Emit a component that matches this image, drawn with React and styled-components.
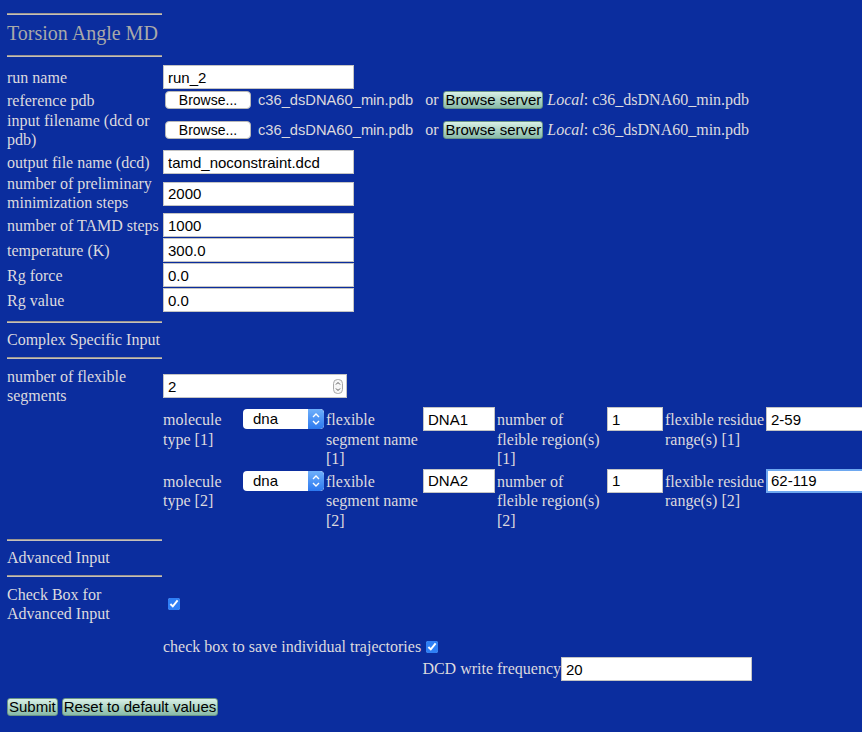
import React from "react";
import styled, { createGlobalStyle } from "styled-components";

const topFields = [
  { label: "run name", value: "run_2", h: 24 },
  { label: "reference pdb", file: true, h: 20 },
  { label: ["input filename (dcd or", "pdb)"], file: true, h: 38 },
  { label: "output file name (dcd)", value: "tamd_noconstraint.dcd", h: 24 },
  { label: ["number of preliminary", "minimization steps"], value: "2000", h: 37 },
  { label: "number of TAMD steps", value: "1000", h: 24 },
  { label: "temperature (K)", value: "300.0", h: 24 },
  { label: "Rg force", value: "0.0", h: 24 },
  { label: "Rg value", value: "0.0", h: 24 },
];

const segments = [
  { n: 1, name: "DNA1", regions: "1", range: "2-59" },
  { n: 2, name: "DNA2", regions: "1", range: "62-119", focused: true },
];

function Lines({ text }) {
  if (!Array.isArray(text)) return text;
  return text.map((line, i) => (
    <React.Fragment key={i}>
      {i > 0 && <br />}
      {line}
    </React.Fragment>
  ));
}

function SelectChevron() {
  return (
    <svg width="16" height="20" viewBox="0 0 16 20">
      <path d="M5 8 L8 5 L11 8" fill="none" stroke="#fff" strokeWidth="1.4" />
      <path d="M5 12 L8 15 L11 12" fill="none" stroke="#fff" strokeWidth="1.4" />
    </svg>
  );
}

function Spinner() {
  return (
    <svg width="10" height="15" viewBox="0 0 10 15">
      <rect x="0.5" y="0.5" width="9" height="14" rx="4" fill="#f6f6f6" stroke="#a8a8a8" />
      <path d="M3 5.5 L5 3.5 L7 5.5" fill="none" stroke="#555" strokeWidth="1" />
      <path d="M3 9.5 L5 11.5 L7 9.5" fill="none" stroke="#555" strokeWidth="1" />
    </svg>
  );
}

function FileField() {
  return (
    <FileLine>
      <FileButton type="button">Browse...</FileButton>
      <FileName>c36_dsDNA60_min.pdb</FileName>
      <OrText>or</OrText>
      <GreenButton type="button" $ml={5}>
        Browse server
      </GreenButton>
      <LocalText>
        <em>Local</em>: c36_dsDNA60_min.pdb
      </LocalText>
    </FileLine>
  );
}

export default function App() {
  return (
    <>
      <GlobalStyle />
      <Page>
        <Divider />
        <Title>Torsion Angle MD</Title>
        <Divider />

        <FieldList>
          {topFields.map((f, i) => (
            <Row key={i} $h={f.h}>
              <Label $lh={f.h === 37 ? 18.5 : 19}>
                <Lines text={f.label} />
              </Label>
              {f.file ? <FileField /> : <TextInput defaultValue={f.value} />}
            </Row>
          ))}
        </FieldList>

        <Divider $mt={9} />
        <SectionTitle>Complex Specific Input</SectionTitle>
        <Divider />

        <FieldList>
          <Row $h={38}>
            <Label>
              number of flexible
              <br />
              segments
            </Label>
            <NumberBox>
              <NumberText>2</NumberText>
              <Spinner />
            </NumberBox>
          </Row>
        </FieldList>

        <SegTable>
          {segments.map((s) => (
            <SegRow key={s.n}>
              <SegLabel $w={78}>
                molecule
                <br />
                type [{s.n}]
              </SegLabel>
              <SelectBox>
                <SelectText>dna</SelectText>
                <SelectArrows>
                  <SelectChevron />
                </SelectArrows>
              </SelectBox>
              <SegLabel $w={95}>
                flexible
                <br />
                segment name
                <br />[{s.n}]
              </SegLabel>
              <TextInput $w={72} defaultValue={s.name} />
              <SegLabel $w={108}>
                number of
                <br />
                fleible region(s)
                <br />[{s.n}]
              </SegLabel>
              <TextInput $w={56} defaultValue={s.regions} />
              <SegLabel $w={99}>
                flexible residue
                <br />
                range(s) [{s.n}]
              </SegLabel>
              <TextInput $focused={s.focused} defaultValue={s.range} />
            </SegRow>
          ))}
        </SegTable>

        <Divider $mt={9} />
        <SectionTitle>Advanced Input</SectionTitle>
        <Divider />

        <FieldList>
          <Row $h={38}>
            <Label>
              Check Box for
              <br />
              Advanced Input
            </Label>
            <Check type="checkbox" defaultChecked />
          </Row>
        </FieldList>

        <TrajBlock>
          <TrajRow>
            check box to save individual trajectories
            <Check type="checkbox" defaultChecked />
          </TrajRow>
          <FreqRow>
            <FreqLabel>DCD write frequency</FreqLabel>
            <TextInput defaultValue="20" />
          </FreqRow>
        </TrajBlock>

        <Actions>
          <GreenButton type="button">Submit</GreenButton>
          <GreenButton type="button">Reset to default values</GreenButton>
        </Actions>
      </Page>
    </>
  );
}

const GlobalStyle = createGlobalStyle`
  html, body {
    overflow-x: hidden;
  }
  body {
    margin: 0;
    background: #0b2d9e;
    color: #dddadf;
    font-family: "Liberation Serif", "Times New Roman", serif;
    font-size: 16px;
  }
`;

const Page = styled.div`
  padding: 13px 0 0 7px;
  min-height: 732px;
  box-sizing: border-box;
  overflow: hidden;
`;

const Divider = styled.div`
  width: 155px;
  margin-top: ${(p) => p.$mt || 0}px;
  border-top: 1px solid #9c968f;
  border-bottom: 1px solid #c6c0ba;
`;

const Title = styled.h2`
  margin: 0;
  padding: 6px 0 10px;
  font-size: 20px;
  line-height: 24px;
  font-weight: normal;
  color: #a9a9a9;
`;

const SectionTitle = styled.div`
  padding: 8px 0;
  font-size: 16px;
  line-height: 18px;
`;

const FieldList = styled.div`
  display: flex;
  flex-direction: column;
  gap: 1px;
  margin-top: 8px;
`;

const Row = styled.div`
  display: flex;
  align-items: center;
  min-height: ${(p) => p.$h}px;
`;

const Label = styled.div`
  width: 156px;
  flex: none;
  line-height: ${(p) => p.$lh || 19}px;
  white-space: nowrap;
`;

const TextInput = styled.input`
  flex: none;
  box-sizing: border-box;
  width: ${(p) => p.$w || 191}px;
  height: 24px;
  margin: 0;
  border: ${(p) => (p.$focused ? "2px solid #6ea8f0" : "1px solid #c4c4c4")};
  padding: 0 4px 0 ${(p) => (p.$focused ? 3 : 4)}px;
  background: #fff;
  color: #000;
  font-family: "Liberation Sans", Arial, sans-serif;
  font-size: 15px;
  outline: none;
`;

const FileLine = styled.div`
  display: flex;
  align-items: center;
  white-space: nowrap;
`;

const FileButton = styled.button`
  width: 86px;
  height: 18px;
  margin: 0 0 0 2px;
  padding: 0;
  background: #fff;
  border: 1px solid #b8b8b8;
  border-radius: 4px;
  color: #000;
  font-family: "Liberation Sans", Arial, sans-serif;
  font-size: 14px;
  line-height: 16px;
`;

const FileName = styled.span`
  margin-left: 7px;
  font-family: "Liberation Sans", Arial, sans-serif;
  font-size: 14.7px;
`;

const OrText = styled.span`
  margin-left: 12px;
`;

const LocalText = styled.span`
  margin-left: 4px;
`;

const GreenButton = styled.button`
  height: 18px;
  margin: 0 0 0 ${(p) => p.$ml || 0}px;
  padding: 0 1px;
  border: 1px solid #6a9485;
  border-radius: 3px;
  background: linear-gradient(#d9f0e6, #aed5c6 50%, #88baa8);
  color: #000;
  font-family: "Liberation Sans", Arial, sans-serif;
  font-size: 15px;
  line-height: 16px;
  white-space: nowrap;
`;

const NumberBox = styled.div`
  box-sizing: border-box;
  width: 184px;
  height: 24px;
  display: flex;
  align-items: center;
  border: 1px solid #c4c4c4;
  background: #fff;
  padding: 0 3px 0 4px;
`;

const NumberText = styled.span`
  flex: 1;
  color: #000;
  font-family: "Liberation Sans", Arial, sans-serif;
  font-size: 15px;
`;

const SegTable = styled.div`
  margin-top: 2px;
  padding-left: 156px;
  display: flex;
  flex-direction: column;
`;

const SegRow = styled.div`
  display: flex;
  align-items: flex-start;
  gap: 2px;
`;

const SegLabel = styled.div`
  flex: none;
  width: ${(p) => p.$w}px;
  padding-top: 3px;
  line-height: 19.5px;
  white-space: nowrap;
`;

const SelectBox = styled.div`
  flex: none;
  display: flex;
  width: 81px;
  height: 20px;
  margin-top: 2px;
  background: #fff;
  border-radius: 4px;
  overflow: hidden;
`;

const SelectText = styled.span`
  flex: 1;
  padding-left: 10px;
  color: #000;
  font-family: "Liberation Sans", Arial, sans-serif;
  font-size: 15px;
  line-height: 20px;
`;

const SelectArrows = styled.span`
  width: 16px;
  display: flex;
  align-items: center;
  justify-content: center;
  background: linear-gradient(#6fb0fb, #2c78ef);
  border-radius: 0 4px 4px 0;
`;

const Check = styled.input`
  width: 12px;
  height: 12px;
  margin: 3px 3px 3px 5px;
  accent-color: #2f7ff5;
`;

const TrajBlock = styled.div`
  margin-top: 14px;
  padding-left: 156px;
`;

const TrajRow = styled.div`
  display: flex;
  align-items: center;
  height: 20px;
  white-space: nowrap;
`;

const FreqRow = styled.div`
  display: flex;
  align-items: center;
`;

const FreqLabel = styled.span`
  width: 398px;
  flex: none;
  text-align: right;
  white-space: nowrap;
`;

const Actions = styled.div`
  display: flex;
  gap: 4px;
  margin-top: 17px;
`;
